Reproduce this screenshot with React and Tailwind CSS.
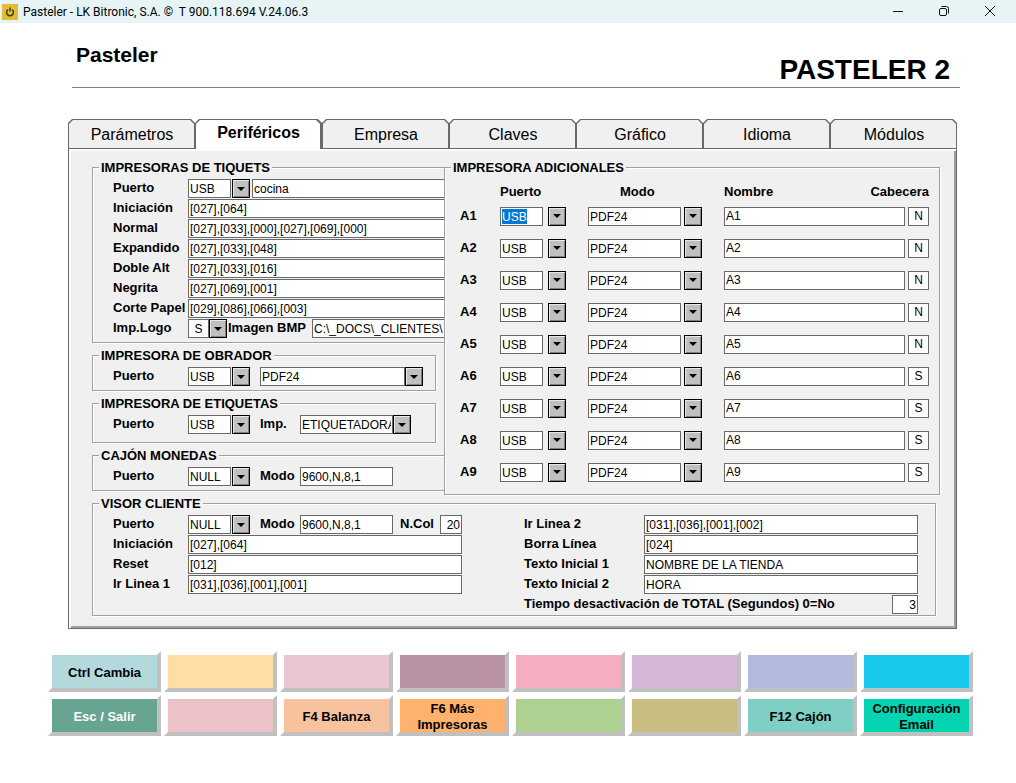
import React, { useId, useState } from 'react';

const TABS = ['Parámetros', 'Periféricos', 'Empresa', 'Claves', 'Gráfico', 'Idioma', 'Módulos'];

const EXTRA_PRINTERS = [
  { id: 'A1', header: 'N' },
  { id: 'A2', header: 'N' },
  { id: 'A3', header: 'N' },
  { id: 'A4', header: 'N' },
  { id: 'A5', header: 'N' },
  { id: 'A6', header: 'S' },
  { id: 'A7', header: 'S' },
  { id: 'A8', header: 'S' },
  { id: 'A9', header: 'S' },
];

const TICKET_CODES = [
  ['Iniciación', '[027],[064]'],
  ['Normal', '[027],[033],[000],[027],[069],[000]'],
  ['Expandido', '[027],[033],[048]'],
  ['Doble Alt', '[027],[033],[016]'],
  ['Negrita', '[027],[069],[001]'],
  ['Corte Papel', '[029],[086],[066],[003]'],
];

const FUNCTION_KEYS = [
  { label: 'Ctrl Cambia', color: 'bg-[#b3d9dc]' },
  { label: '', name: 'F2', color: 'bg-[#ffdea4]' },
  { label: '', name: 'F3', color: 'bg-[#ecc5d4]' },
  { label: '', name: 'F5', color: 'bg-[#b993a4]' },
  { label: '', name: 'F7', color: 'bg-[#f6adc1]' },
  { label: '', name: 'F8', color: 'bg-[#d7b7d8]' },
  { label: '', name: 'F9', color: 'bg-[#b4badd]' },
  { label: '', name: 'F10', color: 'bg-[#17c8eb]' },
  { label: 'Esc / Salir', color: 'bg-[#68a492] text-white' },
  { label: '', name: 'F1', color: 'bg-[#ecc2c8]' },
  { label: 'F4 Balanza', color: 'bg-[#f8c29e]' },
  { label: 'F6 Más Impresoras', color: 'bg-[#ffb26e]' },
  { label: '', name: 'F11', color: 'bg-[#aed191]' },
  { label: '', name: 'Mayús', color: 'bg-[#c9be82]' },
  { label: 'F12 Cajón', color: 'bg-[#80cfc5]' },
  { label: 'Configuración Email', color: 'bg-[#04d4b1]' },
];

function TitleBar() {
  return (
    <div className="flex h-[23px] items-center bg-[#e6f4f5] pl-[2px]">
      <svg viewBox="0 0 16 16" className="h-4 w-4 shrink-0" aria-hidden="true">
        <rect width="16" height="16" fill="#e0bd35" />
        <path d="M6 5.6a3.4 3.4 0 1 0 4 0M8 3.6v4" fill="none" stroke="#4a3d0c" strokeWidth="1.5" />
      </svg>
      <span className="ml-[5px] flex-1 whitespace-pre font-['Roboto','Noto_Sans',sans-serif] text-[12px] leading-4 text-black">
        {'Pasteler - LK Bitronic, S.A. ©  T 900.118.694 V.24.06.3'}
      </span>
      <div className="flex h-full items-center gap-[1px] pr-1 pb-[2px]">
        <button type="button" aria-label="Minimizar" className="flex w-[45px] justify-center">
          <svg viewBox="0 0 12 12" className="h-3 w-3" fill="none" stroke="#111"><path d="M1 6.5h10" /></svg>
        </button>
        <button type="button" aria-label="Restaurar" className="flex w-[45px] justify-center">
          <svg viewBox="0 0 12 12" className="h-3 w-3" fill="none" stroke="#111">
            <rect x="1.5" y="3.5" width="7" height="7" rx="1.5" />
            <path d="M3.5 1.5h5a2 2 0 0 1 2 2v5" />
          </svg>
        </button>
        <button type="button" aria-label="Cerrar" className="flex w-[45px] justify-center">
          <svg viewBox="0 0 12 12" className="h-3 w-3" fill="none" stroke="#111"><path d="M1 1l10 10M11 1L1 11" /></svg>
        </button>
      </div>
    </div>
  );
}

function Tab({ label, active, onClick }) {
  return (
    <button
      type="button"
      role="tab"
      aria-selected={active}
      onClick={onClick}
      className={`h-[30px] bg-[#696969] pt-px pl-px [clip-path:polygon(4px_0,calc(100%_-_4px)_0,100%_4px,100%_100%,0_100%,0_4px)] ${active ? 'pr-[2px]' : 'pr-px pb-px'}`}
    >
      <span
        className={`flex h-full justify-center pl-px text-[16px] leading-5 [clip-path:polygon(4px_0,calc(100%_-_4px)_0,100%_4px,100%_100%,0_100%,0_4px)] ${active ? 'bg-white pt-[3px] font-bold' : 'bg-[#f0f0f0] pt-[5px]'}`}
      >
        {label}
      </span>
    </button>
  );
}

function Group({ title, className = '', children }) {
  return (
    <fieldset className={`min-w-0 border border-[#a0a0a0] shadow-[1px_1px_0_#fff,inset_1px_1px_0_#fff] ${className}`}>
      <legend className="ml-[6px] h-[15px] bg-[#f0f0f0] px-[2px] text-[13px] leading-[15px] font-bold whitespace-nowrap">{title}</legend>
      {children}
    </fieldset>
  );
}

// One line of the form: label on the left, controls after it
function Row({ label, htmlFor, children }) {
  return (
    <div className="flex h-[19px] items-center">
      <Label htmlFor={htmlFor} className="w-[95px] pl-5">{label}</Label>
      {children}
    </div>
  );
}

function Label({ htmlFor, className = '', children }) {
  return (
    <label htmlFor={htmlFor} className={`shrink-0 self-start text-[13px] leading-[18px] font-bold whitespace-nowrap ${className}`}>
      {children}
    </label>
  );
}

function TextBox({ className = '', ...props }) {
  return (
    <input
      type="text"
      className={`h-[19px] min-w-0 border border-[#696969] bg-white px-px text-[12px] leading-4 outline-none ${className}`}
      {...props}
    />
  );
}

function Combo({ id, value, label, width = 'w-[43px]', gap = 'gap-px', selected = false, center = false }) {
  return (
    <div className={`flex shrink-0 items-center ${gap}`}>
      <div className={`flex h-[19px] items-center overflow-hidden border border-[#696969] bg-white px-px ${width}`}>
        <select
          id={id}
          aria-label={label}
          defaultValue={value}
          className={`h-[15px] appearance-none pt-px text-[12px] leading-[14px] outline-none ${selected ? 'bg-[#0078d7] text-white' : 'w-full'} ${center ? 'text-center' : ''}`}
        >
          <option>{value}</option>
        </select>
      </div>
      <button
        type="button"
        aria-label={`Abrir lista ${label || ''}`}
        className="flex h-[19px] w-[18px] shrink-0 items-center justify-center border border-black bg-[#c0c0c0] shadow-[inset_1px_1px_0_#e8e8e8,inset_-1px_-1px_0_#808080]"
      >
        <svg viewBox="0 0 8 4" className="h-1 w-2" aria-hidden="true"><path d="M0 0h8L4 4z" fill="#000" /></svg>
      </button>
    </div>
  );
}

function Field({ label, value, open = false }) {
  const id = useId();
  return (
    <Row label={label} htmlFor={id}>
      <TextBox id={id} defaultValue={value} className={open ? 'flex-1 border-r-0' : 'flex-1'} />
    </Row>
  );
}

function TicketPrinters() {
  return (
    <Group title="IMPRESORAS DE TIQUETS" className="border-r-0">
      <div className="flex flex-col gap-px pt-1 pb-1">
        <Row label="Puerto" htmlFor="tq-puerto">
          <Combo id="tq-puerto" value="USB" />
          <TextBox aria-label="Impresora de tiquets" defaultValue="cocina" className="ml-[2px] flex-1 border-r-0" />
        </Row>
        {TICKET_CODES.map(([label, value]) => (
          <Field key={label} label={label} value={value} open />
        ))}
        <Row label="Imp.Logo" htmlFor="tq-logo">
          <Combo id="tq-logo" value="S" width="w-[21px]" gap="gap-0" center />
          <Label htmlFor="tq-bmp" className="ml-px w-[84px]">Imagen BMP</Label>
          <TextBox id="tq-bmp" defaultValue="C:\_DOCS\_CLIENTES\WEB" className="flex-1 border-r-0" />
        </Row>
      </div>
    </Group>
  );
}

function ExtraPrinters() {
  return (
    <Group title="IMPRESORA ADICIONALES" className="flex-1">
      <table className="w-full table-fixed text-left">
        <colgroup>
          <col className="w-[55px]" />
          <col className="w-[88px]" />
          <col className="w-[136px]" />
          <col />
          <col className="w-[40px]" />
          <col className="w-[34px]" />
        </colgroup>
        <thead>
          <tr className="h-[25px] text-[13px] leading-4">
            <td />
            <th className="pt-2">Puerto</th>
            <th className="pt-2 pl-8">Modo</th>
            <th className="pt-2">Nombre</th>
            <th colSpan={2} className="pt-2 pr-[10px] text-right">Cabecera</th>
          </tr>
        </thead>
        <tbody>
          {EXTRA_PRINTERS.map((p, i) => (
            <tr key={p.id} className="h-8">
              <th className="pl-[15px] text-[13px] leading-4">{p.id}</th>
              <td><Combo label={`Puerto ${p.id}`} value="USB" gap="gap-[5px]" selected={i === 0} /></td>
              <td><Combo label={`Modo ${p.id}`} value="PDF24" width="w-[93px]" gap="gap-[3px]" /></td>
              <td colSpan={2}><TextBox aria-label={`Nombre ${p.id}`} defaultValue={p.id} className="block w-full" /></td>
              <td><TextBox aria-label={`Cabecera ${p.id}`} defaultValue={p.header} className="ml-[3px] block w-[21px] text-center" /></td>
            </tr>
          ))}
        </tbody>
      </table>
      <div className="h-[6px]" />
    </Group>
  );
}

function DisplayField({ label, value }) {
  const id = useId();
  return (
    <div className="flex h-[19px] items-center">
      <Label htmlFor={id} className="w-[120px]">{label}</Label>
      <TextBox id={id} defaultValue={value} className="flex-1" />
    </div>
  );
}

function CustomerDisplay() {
  return (
    <Group title="VISOR CLIENTE" className="mt-px mr-1">
      <div className="flex pt-1 pb-px">
        <div className="flex w-[369px] shrink-0 flex-col gap-px">
          <Row label="Puerto" htmlFor="vs-puerto">
            <Combo id="vs-puerto" value="NULL" />
            <Label htmlFor="vs-modo" className="ml-[10px] w-10">Modo</Label>
            <TextBox id="vs-modo" defaultValue="9600,N,8,1" className="w-[93px]" />
            <Label htmlFor="vs-ncol" className="ml-[7px] w-10">N.Col</Label>
            <TextBox id="vs-ncol" defaultValue="20" className="flex-1 text-right" />
          </Row>
          <Field label="Iniciación" value="[027],[064]" />
          <Field label="Reset" value="[012]" />
          <Field label="Ir Linea 1" value="[031],[036],[001],[001]" />
        </div>
        <div className="mr-[17px] ml-[62px] flex flex-1 flex-col gap-px">
          <DisplayField label="Ir Linea 2" value="[031],[036],[001],[002]" />
          <DisplayField label="Borra Línea" value="[024]" />
          <DisplayField label="Texto Inicial 1" value="NOMBRE DE LA TIENDA" />
          <DisplayField label="Texto Inicial 2" value="HORA" />
          <div className="flex h-[19px] items-center justify-between">
            <Label htmlFor="vs-tiempo">Tiempo desactivación de TOTAL (Segundos) 0=No</Label>
            <TextBox id="vs-tiempo" defaultValue="3" className="w-[26px] text-right" />
          </div>
        </div>
      </div>
    </Group>
  );
}

function FunctionKeys() {
  return (
    <div className="mt-[22px] mr-[43px] ml-12 grid grid-cols-8 gap-[3px]">
      {FUNCTION_KEYS.map((key) => (
        <button
          key={key.label || key.name}
          type="button"
          aria-label={key.label || key.name}
          className={`flex h-[41px] items-center justify-center border-4 border-t-white border-r-[#c0c0c0] border-b-[#c0c0c0] border-l-white pt-[2px] text-center text-[13px] leading-4 font-bold ${key.color}`}
        >
          {key.label}
        </button>
      ))}
    </div>
  );
}

export default function App() {
  const [tab, setTab] = useState('Periféricos');

  return (
    <div className="min-h-screen bg-white font-['Liberation_Sans',Arial,sans-serif] text-black">
      <TitleBar />
      <header className="mr-[56px] ml-[72px] flex h-[65px] items-end justify-between border-b border-[#808080] pr-[10px] pb-[3px] pl-1">
        <h1 className="self-start pt-5 text-[21px] leading-6 font-bold">Pasteler</h1>
        <p className="text-[28px] leading-7 font-bold">PASTELER 2</p>
      </header>

      <main className="mt-[31px] mr-[59px] ml-[68px]">
        <div role="tablist" className="grid grid-cols-7">
          {TABS.map((t) => (
            <Tab key={t} label={t} active={t === tab} onClick={() => setTab(t)} />
          ))}
        </div>
        <div className="border border-t-0 border-[#696969] bg-[#f0f0f0] pt-[11px] pr-4 pb-3 pl-[23px] shadow-[inset_2px_2px_0_#fff,inset_-2px_-2px_0_#a0a0a0]">
          <div className="flex items-start">
            <div className="flex w-[352px] shrink-0 flex-col gap-[5px]">
              <TicketPrinters />
              <Group title="IMPRESORA DE OBRADOR" className="mr-2">
                <div className="py-1">
                  <Row label="Puerto" htmlFor="ob-puerto">
                    <Combo id="ob-puerto" value="USB" />
                    <div className="ml-[10px]"><Combo label="Impresora de obrador" value="PDF24" width="w-[145px]" gap="gap-0" /></div>
                  </Row>
                </div>
              </Group>
              <Group title="IMPRESORA DE ETIQUETAS" className="mr-2">
                <div className="pt-1 pb-2">
                  <Row label="Puerto" htmlFor="et-puerto">
                    <Combo id="et-puerto" value="USB" />
                    <Label htmlFor="et-imp" className="ml-[10px] w-10">Imp.</Label>
                    <Combo id="et-imp" value="ETIQUETADORA" width="w-[93px]" gap="gap-0" />
                  </Row>
                </div>
              </Group>
              <Group title="CAJÓN MONEDAS" className="border-r-0">
                <div className="py-1">
                  <Row label="Puerto" htmlFor="cj-puerto">
                    <Combo id="cj-puerto" value="NULL" />
                    <Label htmlFor="cj-modo" className="ml-[10px] w-10">Modo</Label>
                    <TextBox id="cj-modo" defaultValue="9600,N,8,1" className="w-[93px]" />
                  </Row>
                </div>
              </Group>
            </div>
            <ExtraPrinters />
          </div>
          <CustomerDisplay />
        </div>
      </main>

      <FunctionKeys />
    </div>
  );
}
